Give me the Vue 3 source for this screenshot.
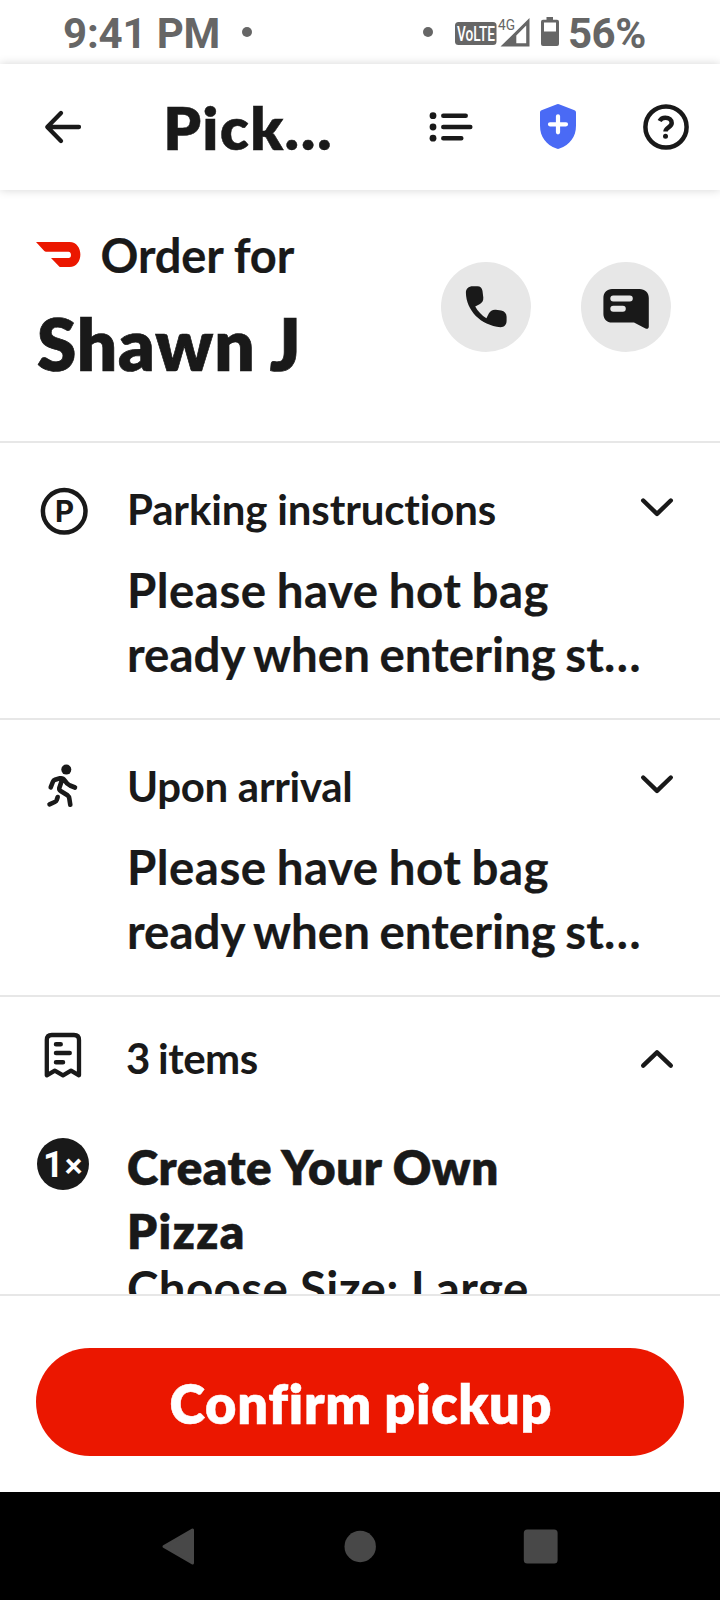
<script setup>
const instructions = [
  { id: 'parking', title: 'Parking instructions', lines: ['Please have hot bag', 'ready when entering st…'] },
  { id: 'arrival', title: 'Upon arrival', lines: ['Please have hot bag', 'ready when entering st…'] },
]
</script>

<template>
  <div class="screen">
    <div class="status">
      <span class="clock">9:41 PM</span>
      <span class="dot dot-left"></span>
      <span class="dot dot-right"></span>
      <svg class="signal" width="106" height="34" viewBox="454 14 106 34">
        <rect x="455" y="22" width="41.5" height="23" rx="3.5" fill="#666" />
        <text x="457" y="41.2" font-size="20.5" textLength="38" lengthAdjust="spacingAndGlyphs" class="volte">VoLTE</text>
        <text x="498" y="30" font-size="15.5" textLength="17" lengthAdjust="spacingAndGlyphs" fill="#666">4G</text>
        <path d="M529.5 18V46.500H500.500Z M526.200 25.500 516.300 35.500V43.300H526.200Z" fill="#666" fill-rule="evenodd" />
        <path d="M546.5 17h6.500v2.800h4q2 0 2 2V44q0 2-2 2H543q-2 0-2-2V21.800q0-2 2-2h3.500Z M544 22.500V31.500H556V22.500Z" fill="#666" fill-rule="evenodd" />
      </svg>
      <span class="percent">56%</span>
    </div>

    <header class="appbar">
      <svg class="back" width="40" height="36" viewBox="43 109 40 36">
        <path d="M61 113 47.300 127 61 141M47.500 127H79" fill="none" stroke="#191919" stroke-width="4.300" stroke-linecap="round" stroke-linejoin="round" />
      </svg>
      <h1 class="title">Pick…</h1>
      <svg class="list" width="46" height="34" viewBox="428 110 46 34">
        <g fill="#191919">
          <circle cx="433" cy="115.700" r="3.400" /><circle cx="433" cy="127" r="3.400" /><circle cx="433" cy="138.200" r="3.400" />
        </g>
        <path d="M443.300 115.800H465.700M443.300 127H470.300M443.300 138.200H461.300" stroke="#191919" stroke-width="4.500" stroke-linecap="round" />
      </svg>
      <svg class="shield" width="38" height="48" viewBox="539 102 38 48">
        <path d="M557 104.300q1-.5 2 0L574.500 110.300q1.500.6 1.500 2.200V125.500c0 11.500-6 19-16.500 23.100q-1.500.6-3 0C546 144.500 540 137 540 125.500V112.500q0-1.600 1.500-2.200Z" fill="#4a6af5" />
        <path d="M558 116.300V132.300M550 124.300H566" stroke="#fff" stroke-width="4.200" stroke-linecap="round" />
      </svg>
      <svg class="help" width="48" height="48" viewBox="642 103 48 48">
        <circle cx="666" cy="127" r="20.600" fill="none" stroke="#191919" stroke-width="4.500" />
        <path d="M659.600 121c1.300-2.300 3.300-3.200 5.700-3.200 4 0 6.400 2.200 6.400 5.200 0 4.300-6.200 4.300-6.200 8.500" fill="none" stroke="#191919" stroke-width="4.500" stroke-linecap="butt" />
        <circle cx="665.500" cy="136.200" r="2.500" fill="#191919" />
      </svg>
    </header>

    <main class="content">
      <section class="order">
        <div class="who">
          <div class="brand">
            <svg width="46" height="27" viewBox="36 241 46 27">
              <path d="M36 242H69.500c14.500 0 14.500 25 0 25H60.500q-.8 0-1.300-.5L51 258H68.500c3.300 0 3.300-6.200 0-6.200H46q-1 0-1.700-.7Z" fill="#eb1700" />
            </svg>
            <span class="order-for">Order for</span>
          </div>
          <div class="name">Shawn J</div>
        </div>
        <div class="actions">
          <button class="round" aria-label="Call">
            <svg width="90" height="90" viewBox="441 262 90 90">
              <path d="M473 286.300h4.500c2.800 0 4.600 1.800 5 4.600l.8 6.600c.2 3.400-1.100 5.200-3.300 6.400l-4.800 2.500c2.600 4.600 6.600 9 11.200 11.800l2.400-4.800c1.400-2.600 4-4 7-3.700l5.400.9c3.400.6 5.400 3 5.400 6.200v4c0 4-2.400 6.400-6 6.400-20-1.600-34.400-17-34.700-34.400 0-4 2.500-6.500 7.100-6.500Z" fill="#191919" />
            </svg>
          </button>
          <button class="round" aria-label="Message">
            <svg width="90" height="90" viewBox="581 262 90 90">
              <path d="M612 289h27.500c5.500 0 9.300 3.700 9.300 9V326.500c0 2-1.500 2.800-3.300 2L634 322.600H612c-5 0-8.600-3.600-8.600-8.600V298c0-5.300 3.600-9 8.600-9Z" fill="#191919" />
              <path d="M613.300 298.500H629.800M613.300 308.800H622.800" stroke="#e7e7e7" stroke-width="6" stroke-linecap="round" />
            </svg>
          </button>
        </div>
      </section>

      <section v-for="item in instructions" :key="item.id" class="info">
        <svg v-if="item.id === 'parking'" class="lead" width="52" height="60" viewBox="38 482 52 60">
          <circle cx="64.200" cy="511.300" r="21.300" fill="none" stroke="#191919" stroke-width="4.500" />
          <text x="55" y="521.700" class="p-mark">P</text>
        </svg>
        <svg v-else class="lead" width="52" height="60" viewBox="38 759 52 60">
          <circle cx="66.300" cy="769.600" r="5" fill="#191919" />
          <path d="M50.700 787.300 53 781.500Q53.500 780.300 55 779.800L60 778.300Q63 777.800 64.500 780.300 66.800 784 70 785.500L75 787.500M62 780 59.300 788Q58.900 790 61 791.300L67.500 795.300Q69 796.500 69.300 798.500L70.300 804.800M57.700 797 56.700 800Q56.200 801.300 54.700 802L49.500 804.300" fill="none" stroke="#191919" stroke-width="4.600" stroke-linecap="round" stroke-linejoin="round" />
        </svg>
        <div class="text">
          <h2 class="label" :class="item.id">{{ item.title }}</h2>
          <p class="body"><span>{{ item.lines[0] }}</span><span class="second">{{ item.lines[1] }}</span></p>
        </div>
        <svg class="chevron" width="34" height="20" viewBox="640 497 34 20">
          <path d="M643.200 500.500 657 513.900 670.800 500.500" fill="none" stroke="#191919" stroke-width="4.400" stroke-linecap="round" stroke-linejoin="round" />
        </svg>
      </section>

      <section class="items">
        <div class="row items-head">
          <svg class="lead" width="52" height="52" viewBox="38 1031 52 52">
            <path d="M46.800 1075.300V1040q0-5 5-5H74q5 0 5 5V1075.300L71 1070.700 63 1075.300 54.800 1070.700Z" fill="none" stroke="#191919" stroke-width="4.300" stroke-linejoin="round" />
            <path d="M56 1044.200H60.700M56 1053.100H69.700M56 1062.200H63" stroke="#191919" stroke-width="4.500" stroke-linecap="round" />
          </svg>
          <h2 class="label count">3 items</h2>
          <svg class="chevron up" width="34" height="20" viewBox="640 1049 34 20">
            <path d="M643.200 1065.700 657 1052.300 670.800 1065.700" fill="none" stroke="#191919" stroke-width="4.400" stroke-linecap="round" stroke-linejoin="round" />
          </svg>
        </div>
        <div class="row item">
          <svg class="qty" width="52" height="52" viewBox="37 1138 52 52">
            <circle cx="63" cy="1164" r="26" fill="#191919" />
            <text x="43" y="1177" class="qty-mark one" font-size="36">1</text>
            <text x="64.300" y="1176.500" class="qty-mark" font-size="32">×</text>
          </svg>
          <div class="dish">
            <div class="dish-name"><span>Create Your Own</span><span class="pizza">Pizza</span></div>
            <div class="size">Choose Size: Large</div>
          </div>
        </div>
      </section>
    </main>

    <footer class="bottom">
      <button class="confirm">Confirm pickup</button>
    </footer>

    <nav class="nav">
      <svg width="36" height="40" viewBox="160 1526 36 40">
        <path d="M164 1546.500 192.500 1530V1563Z" fill="#484848" stroke="#484848" stroke-width="3" stroke-linejoin="round" />
      </svg>
      <svg width="36" height="40" viewBox="342 1526 36 40"><circle cx="360.200" cy="1546.500" r="15.700" fill="#484848" /></svg>
      <svg width="36" height="40" viewBox="523 1526 36 40"><rect x="523.800" y="1529.500" width="33.800" height="34" rx="3.500" fill="#484848" /></svg>
    </nav>
  </div>
</template>

<style>
body { margin: 0; background: #fff; }
</style>

<style scoped>
.screen {
  width: 720px;
  height: 1600px;
  display: flex;
  flex-direction: column;
  overflow: hidden;
  background: #fff;
  color: #191919;
  font-family: Lato, "Liberation Sans", sans-serif;
  font-weight: 700;
}
svg { display: block; flex: none; }
h1, h2, p { margin: 0; font: inherit; }
button { border: 0; padding: 0; color: inherit; font: inherit; }

.status {
  height: 64px;
  box-sizing: border-box;
  padding-left: 63px;
  display: flex;
  align-items: center;
  color: #666;
  font-family: Roboto, "Liberation Sans", sans-serif;
  font-size: 42px;
  white-space: nowrap;
}
.status text { font-family: Roboto, "Liberation Sans", sans-serif; font-weight: 400; }
.status .volte { font-weight: 500; fill: #fff; }
.clock { width: 179px; line-height: 50px; padding-top: 3px; letter-spacing: -.18px; }
.dot { width: 10px; height: 10px; border-radius: 50%; background: #666; }
.dot-right { margin-left: 171px; }
.signal { margin-left: 21px; margin-top: -2px; }
.percent { margin-left: 8px; line-height: 50px; padding-top: 3px; letter-spacing: -.5px; }

.appbar {
  position: relative;
  z-index: 1;
  flex: none;
  height: 126px;
  background: #fff;
  box-shadow: 0 0 9px rgba(0, 0, 0, .17);
  display: flex;
  align-items: center;
}
.back { margin-left: 43px; }
.title { margin-left: 80.5px; width: 264.5px; padding-top: 2px; font-size: 59px; font-weight: 800; line-height: 72px; letter-spacing: 1.6px; -webkit-text-stroke: .5px; }
.shield { margin-left: 65px; margin-top: -2px; }
.help { margin-left: 65px; }

.content { flex: none; height: 1104px; overflow: hidden; }
.order {
  height: 251px;
  border-bottom: 2px solid #e7e7e7;
  display: flex;
  justify-content: space-between;
}
.who { padding: 37px 0 0 36px; }
.brand { display: flex; align-items: center; gap: 18.5px; }
.brand svg { margin-top: -1px; }
.order-for { font-size: 47px; line-height: 56px; letter-spacing: -.15px; -webkit-text-stroke: .2px; }
.name { margin-left: 1px; margin-top: 19px; font-size: 71px; font-weight: 800; line-height: 84px; letter-spacing: .85px; word-spacing: -1px; -webkit-text-stroke: .7px; }
.actions { display: flex; gap: 50px; padding: 72px 49px 0 0; }
.round { width: 90px; height: 90px; border-radius: 50%; background: #e7e7e7; }

.info {
  box-sizing: border-box;
  height: 277px;
  padding-top: 39px;
  border-bottom: 2px solid #e7e7e7;
  display: flex;
}
.lead { margin-left: 38px; width: 52px; }
.text { margin-left: 37px; width: 513px; white-space: nowrap; }
.label { padding-top: 1px; font-size: 42px; line-height: 52px; }
.parking { letter-spacing: -.15px; }
.arrival { letter-spacing: -.3px; }
.body { margin-top: 23px; font-size: 47.5px; line-height: 64px; letter-spacing: .45px; word-spacing: -1.8px; -webkit-text-stroke: .2px; }
.body span { display: block; }
.body .second { letter-spacing: 0; word-spacing: -2px; }
.chevron { margin-top: 15px; }

.items { padding-top: 34px; }
.row { display: flex; }
.count { margin-left: 36px; width: 514px; letter-spacing: -.5px; word-spacing: -1.5px; }
.chevron.up { margin-top: 18px; }
.item { margin-top: 50px; }
.qty { margin-left: 37px; margin-top: 4px; }
.dish { margin-left: 38px; padding-top: 1px; font-size: 47.5px; white-space: nowrap; }
.dish-name { font-weight: 800; line-height: 64px; letter-spacing: .45px; -webkit-text-stroke: .5px; }
.dish-name span { display: block; }
.dish-name .pizza { letter-spacing: 1.4px; }
.size { line-height: 49px; letter-spacing: .35px; }
.p-mark { font-family: Inter, sans-serif; font-size: 29.5px; font-weight: 700; fill: #191919; }
.qty-mark { font-weight: 800; fill: #fff; }
.qty-mark.one { font-family: Roboto, sans-serif; font-weight: 700; }

.bottom {
  flex: none;
  height: 198px;
  box-sizing: border-box;
  border-top: 2px solid #e7e7e7;
  padding: 52px 36px 0;
  background: #fff;
}
.confirm {
  width: 100%;
  height: 108px;
  border-radius: 54px;
  padding: 2px 0 0 2px;
  background: #eb1700;
  color: #fff;
  font-size: 54px;
  font-weight: 800;
  letter-spacing: .75px;
  word-spacing: -1px;
  -webkit-text-stroke: .5px;
}
.nav {
  flex: none;
  height: 108px;
  box-sizing: border-box;
  padding: 0 161px 0 160px;
  background: #000;
  display: flex;
  align-items: center;
  justify-content: space-between;
}
</style>
